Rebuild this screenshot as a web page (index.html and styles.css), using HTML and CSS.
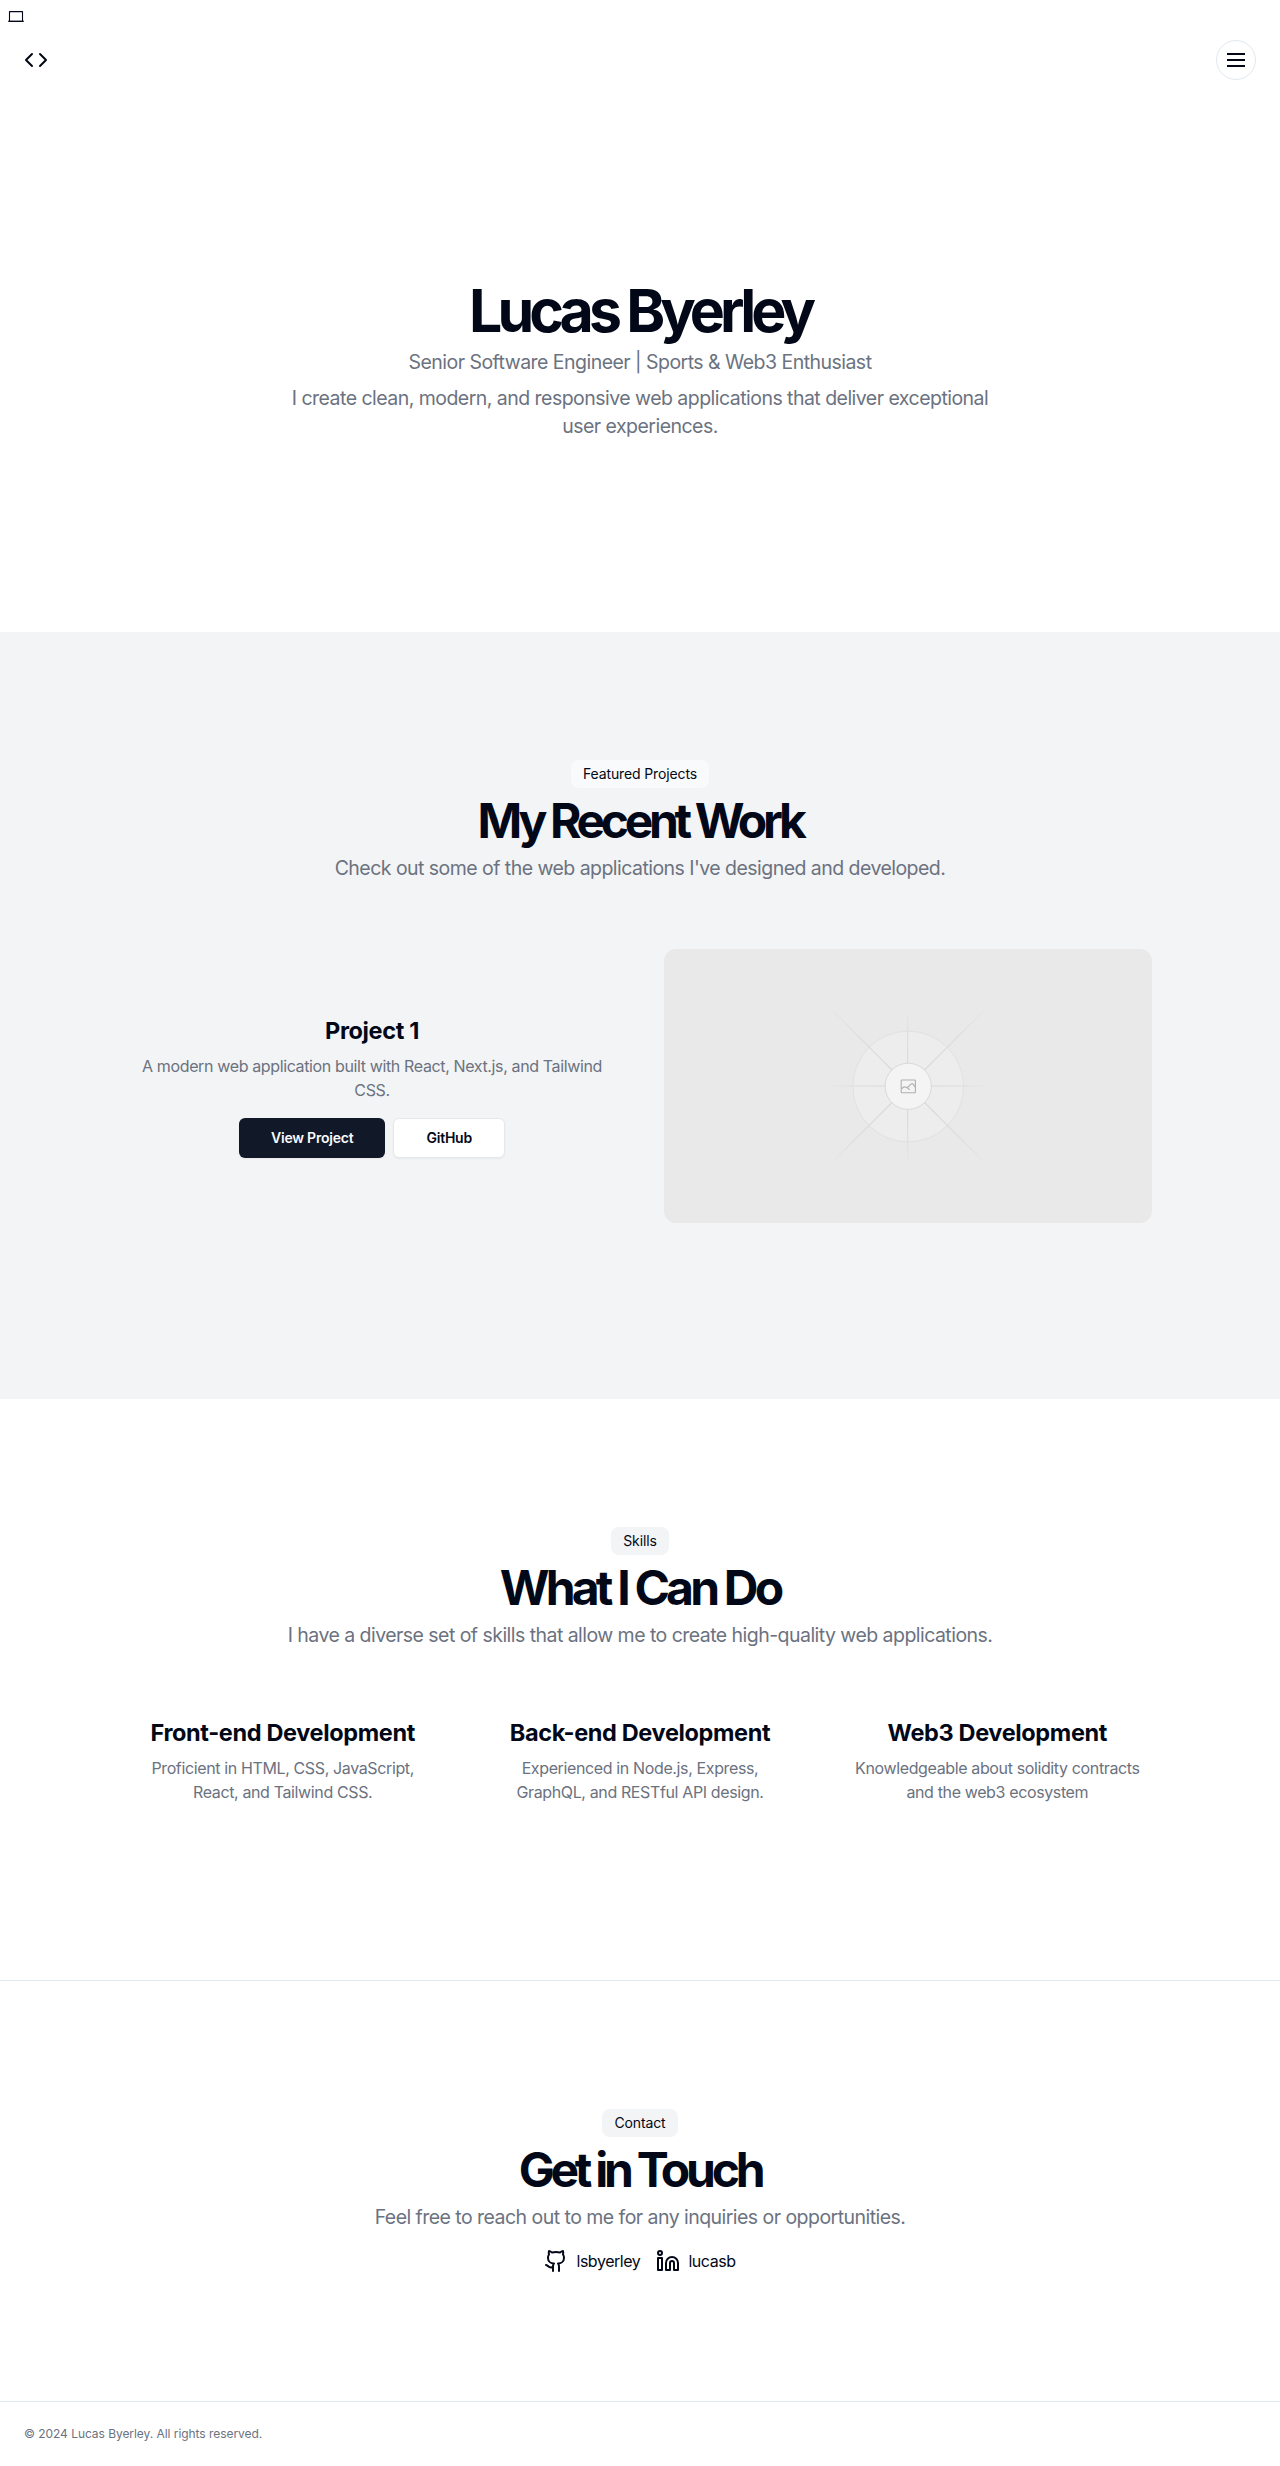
FILE: index.html
```html
<!DOCTYPE html>
<html lang="en">
<head>
<meta charset="utf-8">
<title>Lucas Byerley</title>
<link rel="stylesheet" href="styles.css">
</head>
<body>
<div class="theme-bar">
  <svg class="theme-icon" width="16" height="16" viewBox="0 0 16 16" fill="none" stroke="currentColor"><path d="M1.5 13V3.6h13V13" stroke-width="1.1" stroke-linejoin="round"/><path d="M.3 13.3h15.4" stroke-width="1.4"/></svg>
</div>
<header class="header">
  <a class="logo" href="#" aria-label="Home"><svg class="icon" viewBox="0 0 24 24"><path d="m16 18 6-6-6-6"/><path d="m8 6-6 6 6 6"/></svg></a>
  <button class="menu" aria-label="Menu"><svg class="icon" viewBox="0 0 24 24"><path d="M3 6h18M3 12h18M3 18h18"/></svg></button>
</header>
<main>
  <section class="hero">
    <h1>Lucas Byerley</h1>
    <p class="hero-text">Senior Software Engineer | Sports &amp; Web3 Enthusiast</p>
    <p class="hero-text">I create clean, modern, and responsive web applications that deliver exceptional user experiences.</p>
  </section>
  <section class="section muted">
    <div class="intro">
      <span class="badge">Featured Projects</span>
      <h2 class="title-work">My Recent Work</h2>
      <p class="lead">Check out some of the web applications I've designed and developed.</p>
    </div>
    <div class="grid projects">
      <div class="card">
        <h3>Project 1</h3>
        <p>A modern web application built with React, Next.js, and Tailwind CSS.</p>
        <div class="buttons">
          <a class="btn primary" href="#">View Project</a>
          <a class="btn outline" href="#">GitHub</a>
        </div>
      </div>
      <svg class="preview" viewBox="0 0 488 274.5" fill="none">
        <defs>
          <radialGradient id="fade" gradientUnits="userSpaceOnUse" cx="244.2" cy="137.2" r="112">
            <stop offset="0.2" stop-color="#d8d8d8"/>
            <stop offset="0.6" stop-color="#dcdcdc"/>
            <stop offset="0.8" stop-color="#e2e2e2"/>
            <stop offset="1" stop-color="#e9e9e9"/>
          </radialGradient>
          <radialGradient id="fade-axis" gradientUnits="userSpaceOnUse" cx="244.2" cy="137.2" r="79">
            <stop offset="0.3" stop-color="#d8d8d8"/>
            <stop offset="0.7" stop-color="#dedede"/>
            <stop offset="1" stop-color="#e9e9e9"/>
          </radialGradient>
        </defs>
        <rect width="488" height="274.5" fill="#e9e9e9"/>
        <circle cx="244.2" cy="137.5" r="55.4" fill="#ededed" stroke="#e1e1e1"/>
        <path d="M167 60 321.5 214.5M321.5 60 167 214.5" stroke="url(#fade)" stroke-width="1.1"/>
        <path d="M166 137H322M243.7 60V215" stroke="url(#fade-axis)" stroke-width="1.1"/>
        <circle cx="244.2" cy="137.3" r="23.1" fill="#f4f4f4" stroke="#d9d9d9"/>
        <rect x="237.2" y="131" width="14.2" height="12.8" rx="0.6" stroke="#b0b0b0" stroke-width="1.1"/>
        <path d="M237.5 139.9q2.3-2.6 4.5-1.7t3.6 2.6M243.2 138.8l4.1-3.9q.8-.7 1.5 0l2.6 3.2" stroke="#b0b0b0" stroke-width="1.2"/>
      </svg>
    </div>
  </section>
  <section class="section">
    <div class="intro">
      <span class="badge">Skills</span>
      <h2 class="title-skills">What I Can Do</h2>
      <p class="lead">I have a diverse set of skills that allow me to create high-quality web applications.</p>
    </div>
    <div class="grid skills">
      <div class="card"><h3>Front-end Development</h3><p>Proficient in HTML, CSS, JavaScript, React, and Tailwind CSS.</p></div>
      <div class="card"><h3>Back-end Development</h3><p>Experienced in Node.js, Express, GraphQL, and RESTful API design.</p></div>
      <div class="card"><h3>Web3 Development</h3><p>Knowledgeable about solidity contracts and the web3 ecosystem</p></div>
    </div>
  </section>
  <section class="section contact">
    <div class="intro">
      <span class="badge">Contact</span>
      <h2>Get in Touch</h2>
      <p class="lead">Feel free to reach out to me for any inquiries or opportunities.</p>
    </div>
    <div class="socials">
      <a href="#"><svg class="icon" viewBox="0 0 24 24"><path d="M15 22v-4a4.8 4.8 0 0 0-1-3.5c3 0 6-2 6-5.5.08-1.25-.27-2.48-1-3.5.28-1.15.28-2.35 0-3.5 0 0-1 0-3 1.5-2.64-.5-5.36-.5-8 0C6 2 5 2 5 2c-.3 1.15-.3 2.35 0 3.5A5.403 5.403 0 0 0 4 9c0 3.5 3 5.5 6 5.5-.39.49-.68 1.05-.85 1.65-.17.6-.22 1.23-.15 1.85v4"/><path d="M9 18c-4.51 2-5-2-7-2"/></svg>lsbyerley</a>
      <a href="#"><svg class="icon" viewBox="0 0 24 24"><path d="M16 8a6 6 0 0 1 6 6v7h-4v-7a2 2 0 0 0-4 0v7h-4v-7a6 6 0 0 1 6-6z"/><rect width="4" height="12" x="2" y="9"/><circle cx="4" cy="4" r="2"/></svg>lucasb</a>
    </div>
  </section>
</main>
<footer class="footer">© 2024 Lucas Byerley. All rights reserved.</footer>
</body>
</html>
```
FILE: styles.css
```css
* { box-sizing: border-box; margin: 0; padding: 0; }
body {
  font-family: Inter, "Liberation Sans", sans-serif;
  font-size: 16px;
  line-height: 24px;
  color: #020817;
  background: #fff;
}
a { color: inherit; text-decoration: none; }
.icon {
  display: block;
  width: 24px;
  height: 24px;
  fill: none;
  stroke: currentColor;
  stroke-width: 2;
  stroke-linecap: round;
  stroke-linejoin: round;
}
.theme-bar { height: 32px; padding: 8px; }
.theme-icon { display: block; }
.header {
  display: flex;
  align-items: center;
  justify-content: space-between;
  height: 56px;
  padding: 0 24px;
}
.menu {
  display: flex;
  align-items: center;
  justify-content: center;
  width: 40px;
  height: 40px;
  color: inherit;
  background: #fff;
  border: 1px solid #e2e8f0;
  border-radius: 50%;
}
.menu .icon { stroke-linecap: butt; }
.hero {
  display: flex;
  flex-direction: column;
  align-items: center;
  gap: 8px;
  padding: 192px 24px;
  text-align: center;
}
h1 {
  margin-bottom: -2px;
  font-size: 59px;
  line-height: 62px;
  font-weight: 700;
  letter-spacing: -4.9px;
}
h2 {
  margin-bottom: -2px;
  font-size: 48px;
  line-height: 50px;
  font-weight: 700;
  letter-spacing: -4.25px;
}
.title-work { letter-spacing: -4.35px; }
.title-skills { letter-spacing: -3.8px; }
h3 {
  margin-bottom: -2px;
  font-size: 23.5px;
  line-height: 34px;
  font-weight: 700;
  letter-spacing: -0.36px;
}
.hero-text {
  max-width: 700px;
  font-size: 19.5px;
  line-height: 28px;
  letter-spacing: -0.53px;
  color: #6b7280;
}
.section {
  display: flex;
  flex-direction: column;
  align-items: center;
  gap: 16px;
  padding: 128px 24px;
}
.muted { background: #f3f4f6; }
.intro {
  display: flex;
  flex-direction: column;
  align-items: center;
  gap: 8px;
  text-align: center;
}
.badge {
  padding: 4px 12px;
  font-size: 14px;
  line-height: 20px;
  letter-spacing: -0.13px;
  background: #f3f4f6;
  border-radius: 8px;
}
.muted .badge { background: #f9fafb; }
.lead {
  font-size: 19.5px;
  line-height: 32.5px;
  letter-spacing: -0.54px;
  color: #6b7280;
}
.grid {
  display: grid;
  gap: 48px;
  width: 1024px;
  padding: 48px 0;
  align-items: center;
}
.projects { grid-template-columns: 1fr 1fr; }
.skills { grid-template-columns: repeat(3, 1fr); }
.card {
  display: flex;
  flex-direction: column;
  gap: 8px;
  text-align: center;
}
.card p {
  padding: 0 8px;
  font-size: 16px;
  letter-spacing: -0.37px;
  color: #6b7280;
}
.buttons {
  display: flex;
  justify-content: center;
  gap: 8px;
  margin-top: 8px;
}
.btn {
  display: flex;
  align-items: center;
  height: 40px;
  padding: 0 32px;
  font-size: 14px;
  line-height: 20px;
  font-weight: 600;
  letter-spacing: -0.22px;
  border-radius: 6px;
  box-shadow: 0 1px 2px rgba(0, 0, 0, 0.05);
}
.primary { color: #f9fafb; background: #111827; }
.outline { background: #fff; border: 1px solid #e5e7eb; }
.preview {
  display: block;
  width: 100%;
  height: 274.5px;
  border-radius: 12px;
}
.contact { border-top: 1px solid #e2e8f0; }
.socials { display: flex; gap: 16px; letter-spacing: -0.45px; }
.socials a { display: flex; align-items: center; gap: 8px; }
.footer {
  padding: 24px;
  font-size: 12px;
  line-height: 16px;
  letter-spacing: -0.05px;
  color: #6b7280;
  border-top: 1px solid #e2e8f0;
}
```
